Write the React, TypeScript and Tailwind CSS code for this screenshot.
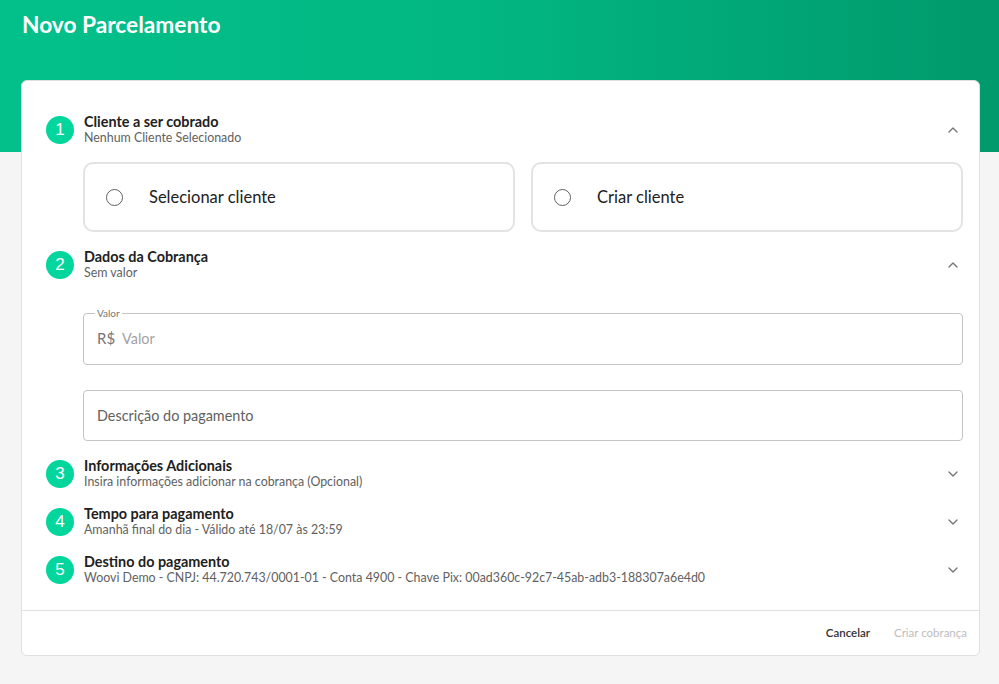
import { ChevronDown, ChevronUp } from "lucide-react";

type Step = {
  n: number;
  title: string;
  sub: string;
  open?: boolean;
};

const StepHeader = ({ n, title, sub, open }: Step) => (
  <div className="flex items-center h-8">
    <div className="w-7 h-7 rounded-full bg-[#03d69d] text-white flex items-center justify-center text-[17px] font-['Liberation_Sans',sans-serif] shrink-0">
      {n}
    </div>
    <div className="ml-[10px] flex-1 min-w-0 -mt-[3px]">
      <div className="text-[14.4px] leading-[17px] font-bold text-[#212121]">{title}</div>
      <div className="text-[12.4px] leading-[15px] text-[#616161]">{sub}</div>
    </div>
    {open ? (
      <ChevronUp size={16} strokeWidth={2} className="text-[#757575] mr-[2px]" />
    ) : (
      <ChevronDown size={16} strokeWidth={2} className="text-[#757575] mr-[2px]" />
    )}
  </div>
);

const OptionBox = ({ label }: { label: string }) => (
  <div className="flex-1 h-[70px] border-2 border-[#e3e3e3] rounded-[10px] flex items-center pl-[21px]">
    <span className="w-[17px] h-[17px] rounded-full border-[1.5px] border-[#616161]" />
    <span className="ml-[26px] text-[16.5px] text-[#212121]">{label}</span>
  </div>
);

export default function App() {
  return (
    <div className="min-h-[684px] bg-[#f5f5f5] font-['Lato',sans-serif]">
      {/* Header */}
      <div className="h-[152px] bg-gradient-to-r from-[#03c08a] via-[#02b681] to-[#00996c] px-[22px] pt-[10px]">
        <h1 className="text-[22.7px] leading-[30px] font-bold text-white">Novo Parcelamento</h1>
      </div>

      {/* Card */}
      <div className="ml-[21px] mr-[19px] -mt-[72px] bg-white border border-[#e0e0e0] rounded-[6px]">
        <div className="pl-[24px] pr-[16px] pt-[33px] pb-[24px]">
          <StepHeader n={1} title="Cliente a ser cobrado" sub="Nenhum Cliente Selecionado" open />
          <div className="ml-[37px] mt-[16px] flex gap-[16px]">
            <OptionBox label="Selecionar cliente" />
            <OptionBox label="Criar cliente" />
          </div>

          <div className="mt-[17px]">
            <StepHeader n={2} title="Dados da Cobrança" sub="Sem valor" open />
          </div>
          <div className="ml-[37px]">
            <fieldset className="mt-[26px] h-[58px] border border-[#c4c4c4] rounded-[4px] px-[13px] flex items-center">
              <legend className="px-[2px] ml-[-2px] text-[10px] leading-[12px] text-[#757575]">Valor</legend>
              <span className="text-[15px] text-[#757575] -mt-[6px]">R$</span>
              <span className="ml-[7px] text-[14.4px] text-[#a3a3a3] -mt-[6px]">Valor</span>
            </fieldset>
            <div className="mt-[25px] h-[51px] border border-[#c4c4c4] rounded-[4px] px-[13px] flex items-center">
              <span className="text-[14.4px] text-[#616161]">Descrição do pagamento</span>
            </div>
          </div>

          <div className="mt-[17px] flex flex-col gap-[16px]">
            <StepHeader n={3} title="Informações Adicionais" sub="Insira informações adicionar na cobrança (Opcional)" />
            <StepHeader n={4} title="Tempo para pagamento" sub="Amanhã final do dia - Válido até 18/07 às 23:59" />
            <StepHeader
              n={5}
              title="Destino do pagamento"
              sub="Woovi Demo - CNPJ: 44.720.743/0001-01 - Conta 4900 - Chave Pix: 00ad360c-92c7-45ab-adb3-188307a6e4d0"
            />
          </div>
        </div>

        {/* Footer */}
        <div className="border-t border-[#e0e0e0] h-[45px] flex items-center justify-end pr-[12px] gap-[24px]">
          <span className="text-[11.5px] font-semibold text-[#333333]">Cancelar</span>
          <span className="text-[11.5px] text-[#bdbdbd]">Criar cobrança</span>
        </div>
      </div>
    </div>
  );
}
